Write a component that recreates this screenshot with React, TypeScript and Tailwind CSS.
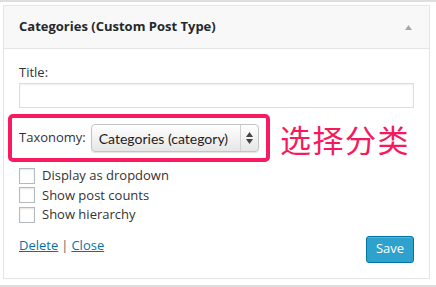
export default function App() {
  return (
    <div className="h-[287px] w-[436px] overflow-hidden border-y-2 border-[#dedede] bg-white font-['Open_Sans',sans-serif] text-[13px] text-[#444]">
      <div className="ml-[3px] mt-[3px] w-[427px] border border-[#e5e5e5] bg-white">
        {/* widget header */}
        <div className="flex h-[43px] items-center justify-between border-b border-[#e5e5e5] bg-[#f8f8f8] pl-[15px] pr-[17px]">
          <span className="font-bold text-[#23282d]">Categories (Custom Post Type)</span>
          <svg width="7" height="5" viewBox="0 0 7 5">
            <path d="M3.5 0 L7 5 L0 5 Z" fill="#a8a8a8" />
          </svg>
        </div>

        <div className="px-[15px] pb-[15px] pt-[13px]">
          <div className="h-[21px] leading-[21px] text-[#333]">Title:</div>
          <input className="block h-[25px] w-[395px] border border-[#ddd] shadow-[inset_0_1px_2px_rgba(0,0,0,0.07)] outline-none" />

          {/* highlighted taxonomy row */}
          <div className="mt-[6px] flex items-center">
            <div className="-ml-[11px] flex h-[48px] w-[262px] items-center rounded-[5px] border-4 border-[#fa1a5f] bg-white pl-[7px]">
              <span className="text-[#333]">Taxonomy:</span>
              <div className="ml-[5px] flex h-[28px] w-[168px] items-center rounded-[4px] border border-[#c4c4c4] bg-gradient-to-b from-white to-[#e6e6e6] shadow-[0_1px_1px_rgba(0,0,0,0.12)] font-['Lato',sans-serif] text-[14px] text-[#222]">
                <span className="flex-1 pl-[7px]">Categories (category)</span>
                <div className="flex h-full w-[18px] flex-col items-center justify-center gap-[2px] border-l border-[#d0d0d0]">
                  <svg width="7" height="5" viewBox="0 0 7 5"><path d="M3.5 0 L7 5 L0 5 Z" fill="#444" /></svg>
                  <svg width="7" height="5" viewBox="0 0 7 5"><path d="M0 0 L7 0 L3.5 5 Z" fill="#444" /></svg>
                </div>
              </div>
            </div>
            <span className="ml-[10px] font-['Noto_Sans_CJK_SC',sans-serif] text-[31px] leading-none tracking-[1.5px] text-[#f51a5c]">选择分类</span>
          </div>

          <div className="mt-[4px] flex flex-col">
            {["Display as dropdown", "Show post counts", "Show hierarchy"].map((t) => (
              <label key={t} className="flex h-[19.5px] items-center gap-[7px] text-[#333]">
                <span className="h-[16px] w-[16px] border border-[#b4b9be] bg-white shadow-[inset_0_1px_2px_rgba(0,0,0,0.1)]" />
                {t}
              </label>
            ))}
          </div>

          <div className="mt-[11px] flex items-start justify-between">
            <div className="mt-[-1px] leading-[20px] text-[#0073aa]">
              <a className="underline">Delete</a>
              <span className="mx-[3px] text-[#666]">|</span>
              <a className="underline">Close</a>
            </div>
            <button className="h-[27px] w-[48px] rounded-[3px] border border-[#0074a2] bg-[#2ea2cc] text-[13px] text-white shadow-[inset_0_1px_0_rgba(120,200,230,0.5)]">
              Save
            </button>
          </div>
        </div>
      </div>
    </div>
  );
}
